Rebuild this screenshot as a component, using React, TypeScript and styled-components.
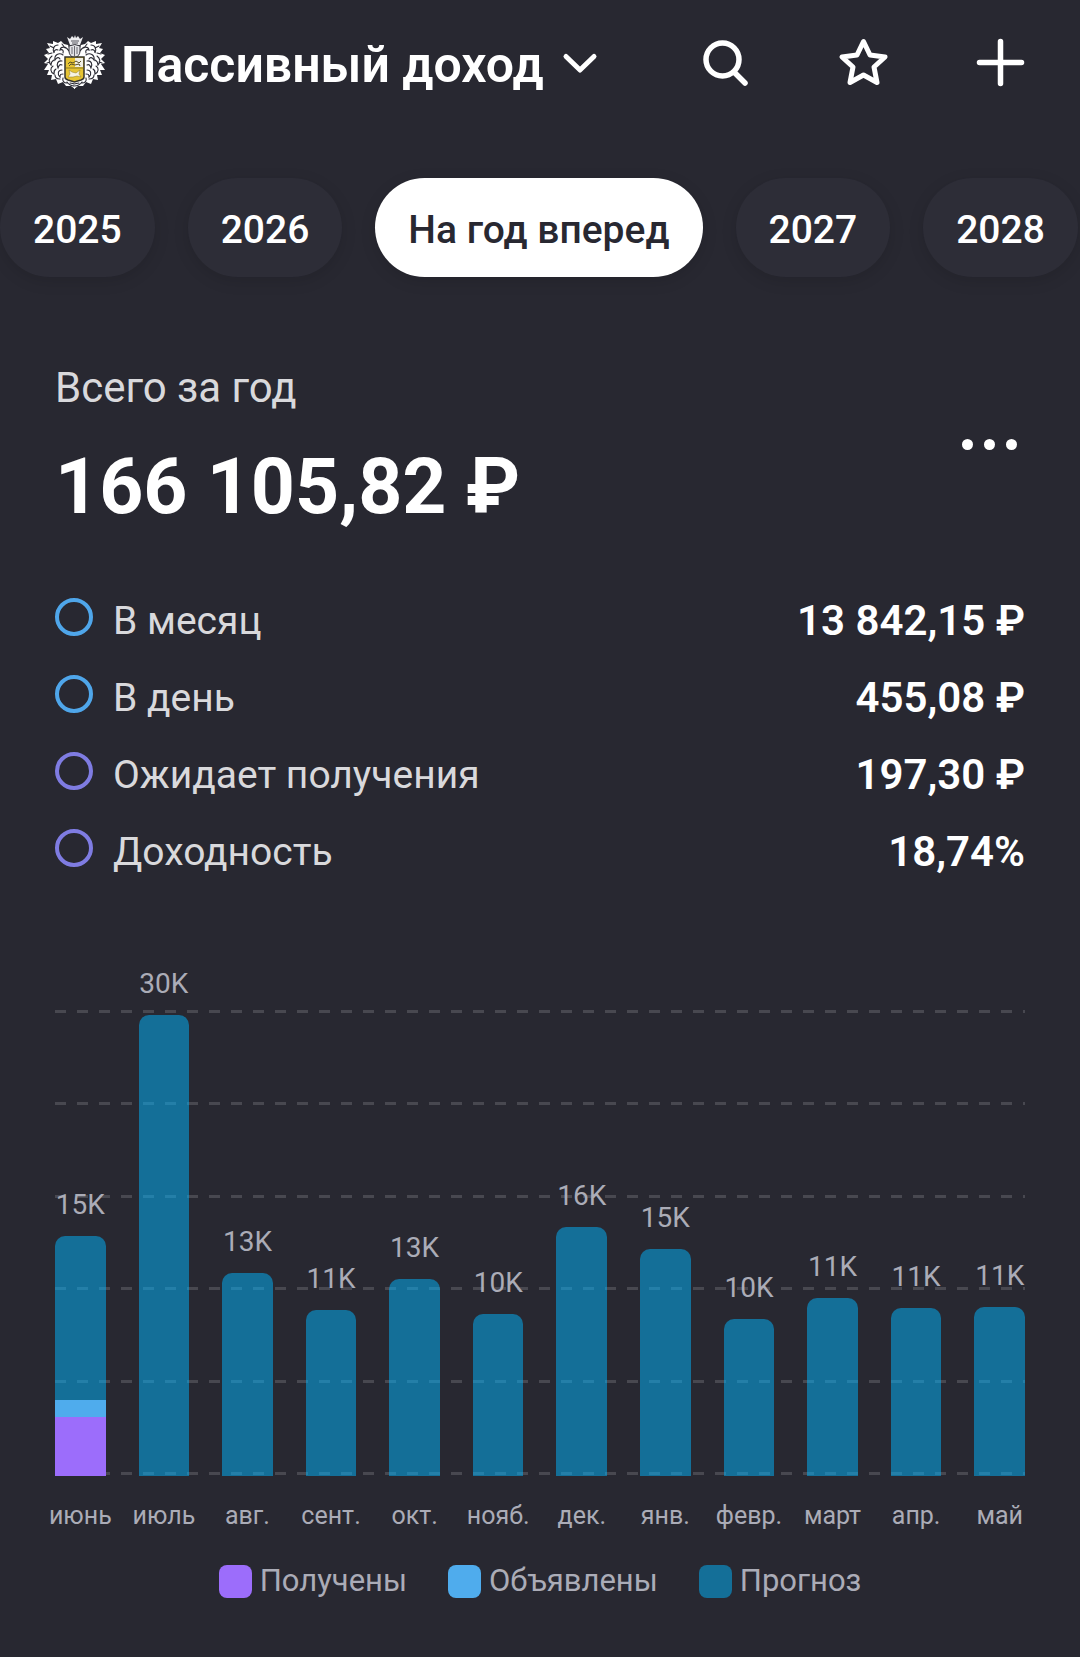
import React, {useState} from "react";
import styled, {createGlobalStyle, css} from "styled-components";

const colors = {
  background: '#282831',
  pill: '#2d2d37',
  text: '#ffffff',
  label: '#d9d9dc',
  muted: '#abacb7',
  gridLine: '#484850',
  received: '#9c6dfb',
  announced: '#4faced',
  forecast: 'rgba(0, 182, 255, 0.5)',
  ringBlue: '#4fa6ea',
  ringViolet: '#7f7ce2',
}

// height of the chart between the 0 and 30K lines
const SCALE_HEIGHT = 462;
const SCALE_MAX = 30000;

const GlobalStyle = createGlobalStyle`
  * {
    box-sizing: border-box;
  }

  body {
    margin: 0;
    background-color: ${colors.background};
    color: ${colors.text};
    font-family: Roboto, "Liberation Sans", sans-serif;
  }

  button {
    border: 0;
    padding: 0;
    background: none;
    color: inherit;
    font-family: inherit;
    cursor: pointer;
  }
`

const Page = styled.main`
  overflow: hidden;
  min-height: 100vh;
  padding-bottom: 58px;
`

const Header = styled.header`
  display: flex;
  align-items: center;
  justify-content: space-between;
  padding: 35px 44px 0;
`

const PortfolioButton = styled.button`
  display: flex;
  align-items: center;
`

const Title = styled.h1`
  margin: 0 17px 0 15px;
  font-weight: 600;
  font-size: 50px;
  line-height: 60px;
  white-space: nowrap;
`

const Actions = styled.div`
  display: flex;
  gap: 65px;
`

const IconButton = styled.button`
  display: flex;
  justify-content: center;
  width: 72px;
  height: 56px;
`

const Tabs = styled.nav`
  display: flex;
  gap: 33px;
  padding: 83px 0 40px;
  overflow-x: auto;
  scrollbar-width: none;
`

const Tab = styled.button<{$active: boolean}>`
  flex: none;
  padding: 29px 33px 24px;
  border-radius: 50px;
  background-color: ${colors.pill};
  box-shadow: 0 4px 16px rgba(0, 0, 0, 0.12);
  font-weight: 500;
  font-size: 39px;
  line-height: 46px;
  white-space: nowrap;

  ${({$active}) => $active && css`
    background-color: ${colors.text};
    color: ${colors.background};
  `}
`

const Content = styled.div`
  padding: 46px 55px 0;
`

const Summary = styled.section`
  display: flex;
  align-items: center;
  justify-content: space-between;
`

const SummaryLabel = styled.div`
  margin-bottom: 28px;
  color: ${colors.label};
  font-size: 42px;
  line-height: 50px;
`

const SummaryAmount = styled.div`
  font-weight: 700;
  font-size: 77px;
  line-height: 92px;
`

const Stats = styled.dl`
  display: flex;
  flex-direction: column;
  gap: 27px;
  margin: 63px 0 90px;
`

const StatRow = styled.div`
  display: flex;
  align-items: flex-start;
  line-height: 50px;
`

const Ring = styled.span<{$color: string}>`
  width: 38px;
  height: 38px;
  margin: 2px 20px 0 0;
  border: 4px solid ${({$color}) => $color};
  border-radius: 50%;
`

const StatName = styled.dt`
  flex: 1;
  color: ${colors.label};
  font-size: 39px;
`

const StatValue = styled.dd`
  margin: 0;
  font-weight: 600;
  font-size: 42px;
`

const Plot = styled.div`
  display: grid;
  align-items: end;

  > * {
    grid-area: 1 / 1;
  }
`

const GridLines = styled.div`
  display: flex;
  flex-direction: column;
  justify-content: space-between;
  height: 465px;
  margin-bottom: 1px;
`

const GridLine = styled.div`
  height: 3px;
  background: repeating-linear-gradient(90deg, ${colors.gridLine} 0 11px, transparent 11px 22px);
`

const Columns = styled.div`
  display: grid;
  grid-template-columns: repeat(12, minmax(0, 1fr));
  align-items: end;
  gap: 33px;
`

const Column = styled.div`
  display: flex;
  flex-direction: column;
  align-items: center;
`

const ColumnLabel = styled.div`
  margin-bottom: 14px;
  color: ${colors.muted};
  font-size: 28px;
  line-height: 34px;
`

const Bar = styled.div`
  width: 100%;
  overflow: hidden;
  border-radius: 10px 10px 0 0;
`

const Segment = styled.div<{$color: string}>`
  background-color: ${({$color}) => $color};
`

const Months = styled(Columns)`
  margin-top: 25px;
`

const Month = styled.div`
  display: flex;
  justify-content: center;
  color: ${colors.muted};
  font-size: 25px;
  line-height: 30px;
  white-space: nowrap;
`

const Legend = styled.div`
  display: flex;
  justify-content: center;
  gap: 41px;
  margin-top: 32px;
`

const LegendItem = styled.div`
  display: flex;
  align-items: center;
  gap: 8px;
  color: ${colors.muted};
  font-size: 31px;
  line-height: 36px;
`

const Swatch = styled.span<{$color: string}>`
  width: 33px;
  height: 33px;
  border-radius: 8px;
  background-color: ${({$color}) => $color};
`

const tabs = ['2025', '2026', 'На год вперед', '2027', '2028'];

const stats = [
  {name: 'В месяц', value: '13 842,15 ₽', color: colors.ringBlue},
  {name: 'В день', value: '455,08 ₽', color: colors.ringBlue},
  {name: 'Ожидает получения', value: '197,30 ₽', color: colors.ringViolet},
  {name: 'Доходность', value: '18,74%', color: colors.ringViolet},
];

type MonthType = {
  month: string,
  label: string,
  forecast: number,
  announced?: number,
  received?: number
}

const months: MonthType[] = [
  {month: 'июнь', label: '15K', forecast: 10650, announced: 1080, received: 3800},
  {month: 'июль', label: '30K', forecast: 29950},
  {month: 'авг.', label: '13K', forecast: 13200},
  {month: 'сент.', label: '11K', forecast: 10780},
  {month: 'окт.', label: '13K', forecast: 12810},
  {month: 'нояб.', label: '10K', forecast: 10520},
  {month: 'дек.', label: '16K', forecast: 16190},
  {month: 'янв.', label: '15K', forecast: 14760},
  {month: 'февр.', label: '10K', forecast: 10210},
  {month: 'март', label: '11K', forecast: 11580},
  {month: 'апр.', label: '11K', forecast: 10930},
  {month: 'май', label: '11K', forecast: 10980},
];

const legend = [
  {name: 'Получены', color: colors.received},
  {name: 'Объявлены', color: colors.announced},
  {name: 'Прогноз', color: colors.forecast},
];

const barHeight = (amount: number) => Math.round(amount / SCALE_MAX * SCALE_HEIGHT);

// left half of the mantling, the right one is its mirror
const Mantling: React.FC = () => (
  <>
    <path
      d="M31 16 26 15 24 10 20 9 17 6 14 8 9 6 9 9 3 8 6 13 2 14 5 18 0 20 4 24 0 28 4 29 0 35 5 35 3 40 8 40 7 45 12 44 14 49 19 47 22 51 27 51 31 54Z"
      fill="#fff"
    />
    <path
      d="M25 16c-3-5-8-5-9-1 2-1 4 0 3 3M14 10c-4 0-6 4-4 8 0-3 2-4 4-3M19 20c-4-3-9 0-8 5 2-3 4-3 5-1M8 21c-3 2-4 6-1 9 0-3 1-4 3-5M18 26c-4-1-6 3-4 7 1-3 2-4 4-3M9 31c-3 2-3 6 1 8 0-3 0-4 2-5M18 35c-4 0-5 4-2 7 0-3 1-3 3-3M11 40c0 3 2 4 5 4M19 43c-1 3 1 5 4 5M18 9l3 4M6 11l4 2M4 19l4-1M3 28l3-1M23 47c2 3 5 4 8 4M26 48l5 1"
      fill="none" stroke="#2c2c35" strokeWidth="1.1" strokeLinecap="round"
    />
  </>
)

const Crest: React.FC = () => (
  <svg width="62" height="60" viewBox="0 0 62 60" aria-hidden="true">
    <Mantling/>
    <g transform="translate(61 0) scale(-1 1)"><Mantling/></g>
    <path d="M23 2l3 2 2-3 2 2 1-3 1 3 2-2 2 3 3-2-3 8H26Z" fill="#ececef"/>
    <path d="M27 6h8M28 8h6" stroke="#55555c"/>
    <path d="M25 11q6-3 11 0v5q0 5-5.500 7-5.500-2-5.500-7Z" fill="#e3e3e6" stroke="#33333a"/>
    <path d="M28 12v7M30.500 11v10M33 12v7" stroke="#6a6a72"/>
    <path d="M21 22h19v20q0 2-3 3l-6.500 2-6.500-2q-3-1-3-3Z" fill="#e6c433" stroke="#35332b" strokeWidth="1.500"/>
    <path d="M31 23h8v9h-8Z" fill="#f1efe5"/>
    <path d="M22 33h17" stroke="#8a7a24"/>
    <path d="M24 29l2-2 3 1 3-2 3 2 2-2M25 31l2-2 4 1 4-1 1 2" fill="none" stroke="#5b5228"/>
    <path d="M24 42l2-3-1-4 3 2 4 1 4-3-1 4 2 3-4-1-4 1Z" fill="#f6f3e2" stroke="#8b7722" strokeWidth=".5"/>
  </svg>
)

const App: React.FC = () => {
  const [activeTab, setActiveTab] = useState('На год вперед');

  return (
    <>
      <GlobalStyle/>
      <Page>
        <Header>
          <PortfolioButton>
            <Crest/>
            <Title>Пассивный доход</Title>
            <svg width="38" height="56" viewBox="0 0 38 56" fill="none" stroke="currentColor" strokeWidth="5" strokeLinecap="round" strokeLinejoin="round">
              <path d="M5 19.500 19 33 33 19.500"/>
            </svg>
          </PortfolioButton>
          <Actions>
            <IconButton aria-label="Поиск">
              <svg width="56" height="56" viewBox="0 0 56 56" fill="none" stroke="currentColor" strokeLinecap="round">
                <circle cx="24.500" cy="22.500" r="16.500" strokeWidth="5.500"/>
                <path d="M36.500 35.500 47 46" strokeWidth="5.500"/>
              </svg>
            </IconButton>
            <IconButton aria-label="Избранное">
              <svg width="56" height="56" viewBox="0 0 56 56" fill="none" stroke="currentColor" strokeWidth="5" strokeLinejoin="round">
                <path d="M28.500 4.500 35 18 50 20 39 30 42 45.500 28.500 38 15 45.500 18 30 7 20 22 18Z"/>
              </svg>
            </IconButton>
            <IconButton aria-label="Добавить">
              <svg width="56" height="56" viewBox="0 0 56 56" stroke="currentColor" strokeWidth="5.500" strokeLinecap="round">
                <path d="M28.500 4.500v42M7.500 25.500h42"/>
              </svg>
            </IconButton>
          </Actions>
        </Header>

        <Tabs>
          {tabs.map(tab => (
            <Tab key={tab} $active={tab === activeTab} onClick={() => setActiveTab(tab)}>{tab}</Tab>
          ))}
        </Tabs>

        <Content>
          <Summary>
            <div>
              <SummaryLabel>Всего за год</SummaryLabel>
              <SummaryAmount>166 105,82 ₽</SummaryAmount>
            </div>
            <IconButton aria-label="Ещё">
              <svg width="56" height="56" viewBox="0 0 56 56" fill="currentColor">
                <circle cx="6.500" cy="24.500" r="5.500"/>
                <circle cx="28.500" cy="24.500" r="5.500"/>
                <circle cx="50.500" cy="24.500" r="5.500"/>
              </svg>
            </IconButton>
          </Summary>

          <Stats>
            {stats.map(({name, value, color}) => (
              <StatRow key={name}>
                <Ring $color={color}/>
                <StatName>{name}</StatName>
                <StatValue>{value}</StatValue>
              </StatRow>
            ))}
          </Stats>

          <Plot>
            <GridLines>
              {[30, 24, 18, 12, 6, 0].map(line => <GridLine key={line}/>)}
            </GridLines>
            <Columns>
              {months.map(({month, label, forecast, announced, received}) => (
                <Column key={month}>
                  <ColumnLabel>{label}</ColumnLabel>
                  <Bar>
                    <Segment $color={colors.forecast} style={{height: barHeight(forecast)}}/>
                    {announced && <Segment $color={colors.announced} style={{height: barHeight(announced)}}/>}
                    {received && <Segment $color={colors.received} style={{height: barHeight(received)}}/>}
                  </Bar>
                </Column>
              ))}
            </Columns>
          </Plot>
          <Months>
            {months.map(({month}) => <Month key={month}>{month}</Month>)}
          </Months>

          <Legend>
            {legend.map(({name, color}) => (
              <LegendItem key={name}>
                <Swatch $color={color}/>
                {name}
              </LegendItem>
            ))}
          </Legend>
        </Content>
      </Page>
    </>
  );
};

export default App;
